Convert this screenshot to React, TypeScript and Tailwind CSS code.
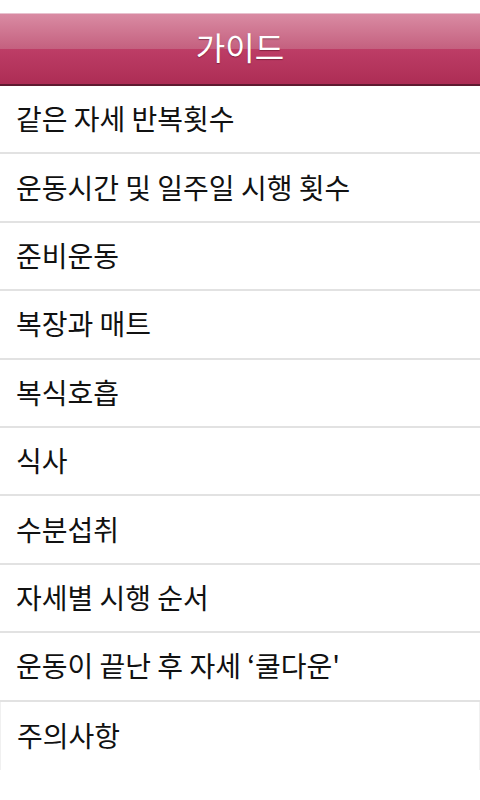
const items = [
  '같은 자세 반복횟수',
  '운동시간 및 일주일 시행 횟수',
  '준비운동',
  '복장과 매트',
  '복식호흡',
  '식사',
  '수분섭취',
  '자세별 시행 순서',
  '운동이 끝난 후 자세 ‘쿨다운\'',
  '주의사항',
];

export default function App() {
  return (
    <div
      className="w-[480px] h-[800px] bg-white overflow-hidden"
      style={{ fontFamily: '"Noto Sans CJK KR", "Noto Sans", sans-serif' }}
    >
      <div className="h-[13px] bg-white" />
      <header className="relative h-[73px] border-t border-[#e8c2cf] border-b-2 border-b-[#5e1a30] flex flex-col">
        <div className="h-[35px] bg-gradient-to-b from-[#d98ba3] to-[#c4607f]" />
        <div className="flex-1 bg-gradient-to-b from-[#bd3d66] to-[#ad2d55]" />
        <h1 className="absolute inset-0 pb-[6px] flex items-center justify-center text-white text-[32px] leading-none [text-shadow:0_1px_1px_rgba(80,10,30,0.5)]">
          가이드
        </h1>
      </header>
      <ul>
        {items.map((item, i) => (
          <li
            key={i}
            className={`h-[68.4px] flex items-center pl-4 pb-[2px] text-[28px] text-[#111] ${
              i < items.length - 1 ? 'border-b-2 border-[#e2e2e2]' : 'border-x border-[#f0f0f0]'
            }`}
          >
            {item}
          </li>
        ))}
      </ul>
    </div>
  );
}
